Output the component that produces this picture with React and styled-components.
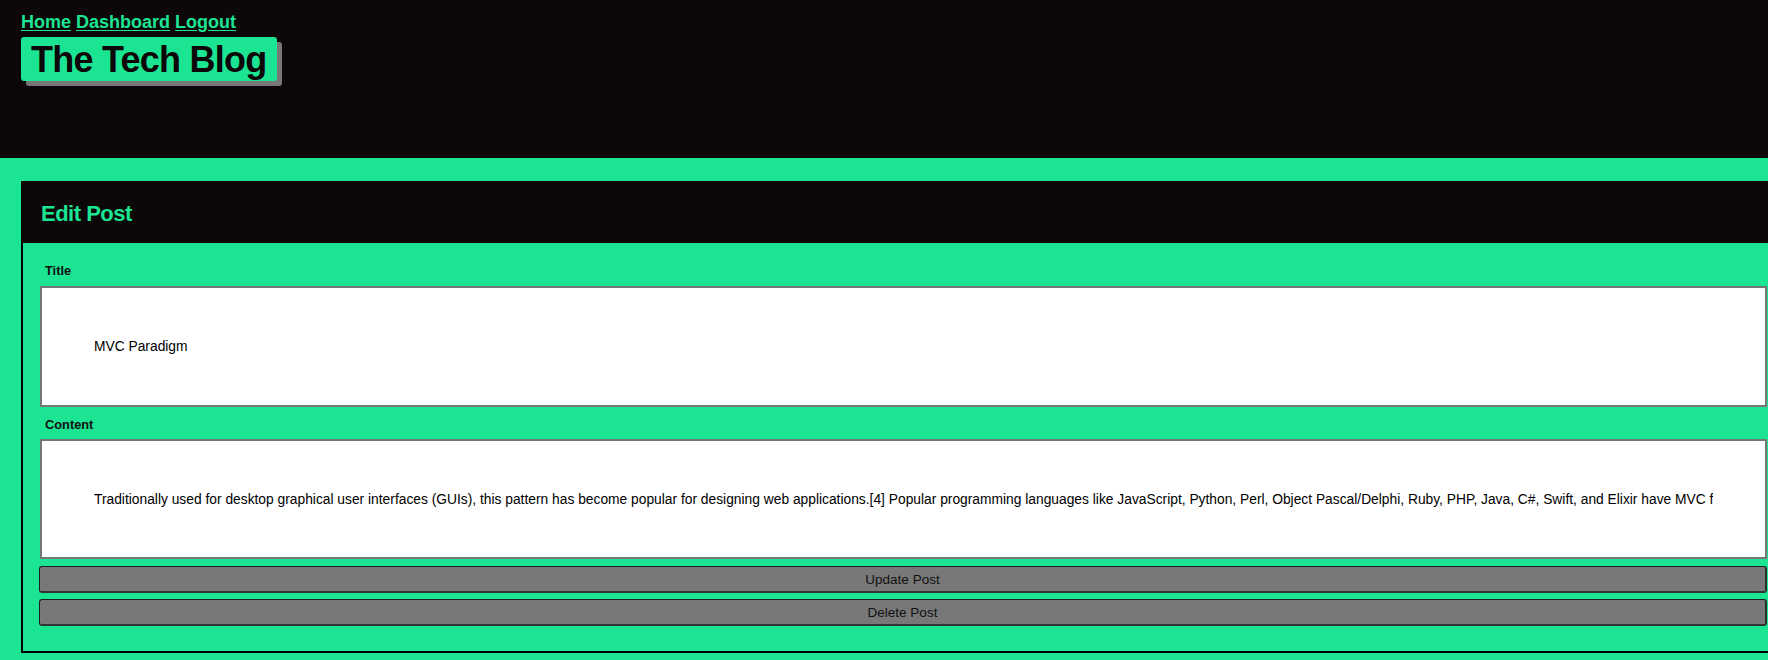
import React from "react";
import styled, { createGlobalStyle } from "styled-components";

const ink = "#0c0708";
const mint = "#1be592";

const GlobalStyle = createGlobalStyle`
  html, body {
    margin: 0;
    padding: 0;
    background: ${mint};
    overflow-x: hidden;
    font-family: "Liberation Sans", Arial, sans-serif;
  }
  * { box-sizing: border-box; }
`;

const Header = styled.header`
  background: ${ink};
  height: 158px;
  padding: 12px 21px 0;
`;

const Nav = styled.nav`
  font-size: 18px;
  font-weight: 700;
  line-height: 20.7px;
  color: ${mint};
`;

const NavLink = styled.a`
  color: ${mint};
  text-decoration: underline;
  text-underline-offset: 2px;
  cursor: pointer;
`;

const Brand = styled.h1`
  display: inline-block;
  margin: 4px 0 0;
  padding: 0 10px;
  height: 44px;
  line-height: 45px;
  font-size: 36px;
  font-weight: 700;
  letter-spacing: -0.75px;
  color: ${ink};
  background: ${mint};
  border-radius: 3px;
  box-shadow: 5px 5px 0 #777;
`;

const Main = styled.main`
  padding: 23px 0 40px 21px;
`;

// the card is a little wider than the page, so its right edge runs off screen
const Card = styled.section`
  width: calc(100% + 18px);
  border: 2px solid #000;
  border-top-color: ${ink};
`;

const CardHeader = styled.div`
  background: ${ink};
  padding: 18px 18px 17px;
`;

const CardTitle = styled.h2`
  margin: 0;
  font-size: 22px;
  line-height: 25px;
  font-weight: 700;
  letter-spacing: -0.5px;
  color: ${mint};
`;

const CardBody = styled.form`
  padding: 21px 17px 25px 17px;
  display: flex;
  flex-direction: column;
`;

const Label = styled.label`
  display: block;
  margin: ${(p) => (p.$first ? "0" : "11px")} 0 7px 5px;
  font-size: 12.8px;
  line-height: 14.7px;
  font-weight: 700;
  color: #111;
`;

const Field = styled.input`
  display: block;
  width: 100%;
  height: ${(p) => p.$h}px;
  padding: 0 52px;
  border: 2px solid #767676;
  background: #fff;
  font-family: "Liberation Sans", Arial, sans-serif;
  font-size: 13.8px;
  color: #000;
  outline: none;
`;

const Button = styled.button`
  display: block;
  width: calc(100% + 1px);
  margin: ${(p) => p.$gap}px 0 0 -1px;
  height: 27px;
  background: #787878;
  border: 1px solid #1e1e1e;
  border-right: 2px solid #2e2e2e;
  border-bottom: 2px solid #333;
  border-radius: 3px;
  font-family: "Liberation Sans", Arial, sans-serif;
  font-size: 13.5px;
  color: #111;
  cursor: pointer;
`;

const content =
  "Traditionally used for desktop graphical user interfaces (GUIs), this pattern has become popular for designing web applications.[4] Popular programming languages like JavaScript, Python, Perl, Object Pascal/Delphi, Ruby, PHP, Java, C#, Swift, and Elixir have MVC frameworks that are used for web or mobile application development straight out of the box.";

export default function App() {
  return (
    <>
      <GlobalStyle />
      <Header>
        <Nav>
          <NavLink>Home</NavLink> <NavLink>Dashboard</NavLink>{" "}
          <NavLink>Logout</NavLink>
        </Nav>
        <Brand>The Tech Blog</Brand>
      </Header>
      <Main>
        <Card>
          <CardHeader>
            <CardTitle>Edit Post</CardTitle>
          </CardHeader>
          <CardBody onSubmit={(e) => e.preventDefault()}>
            <Label $first htmlFor="title">Title</Label>
            <Field id="title" $h={121} defaultValue="MVC Paradigm" />
            <Label htmlFor="content">Content</Label>
            <Field id="content" $h={120} defaultValue={content} />
            <Button type="button" $gap={7}>Update Post</Button>
            <Button type="button" $gap={6}>Delete Post</Button>
          </CardBody>
        </Card>
      </Main>
    </>
  );
}
